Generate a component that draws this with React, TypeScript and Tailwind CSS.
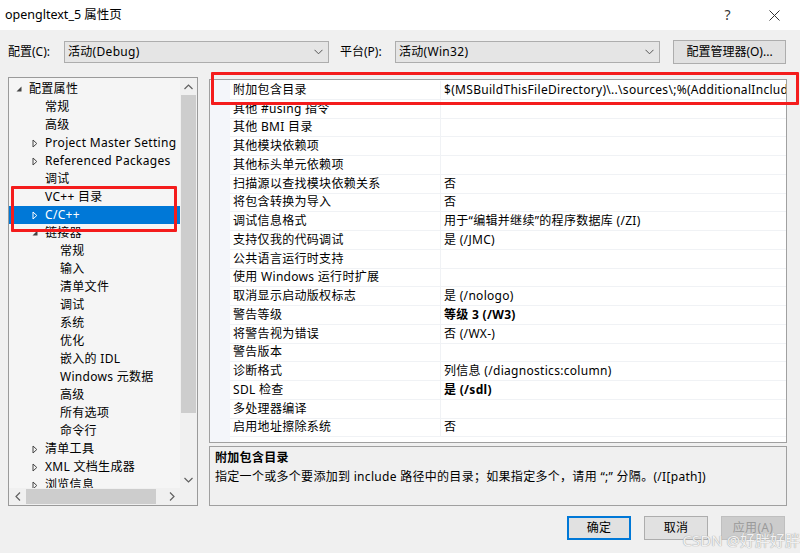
import React from "react";

type TreeItem = { t: string; lvl: 0 | 1 | 2; icon?: "exp" | "col"; sel?: boolean };

const tree: TreeItem[] = [
  { t: "配置属性", lvl: 0, icon: "exp" },
  { t: "常规", lvl: 1 },
  { t: "高级", lvl: 1 },
  { t: "Project Master Setting", lvl: 1, icon: "col" },
  { t: "Referenced Packages", lvl: 1, icon: "col" },
  { t: "调试", lvl: 1 },
  { t: "VC++ 目录", lvl: 1 },
  { t: "C/C++", lvl: 1, icon: "col", sel: true },
  { t: "链接器", lvl: 1, icon: "exp" },
  { t: "常规", lvl: 2 },
  { t: "输入", lvl: 2 },
  { t: "清单文件", lvl: 2 },
  { t: "调试", lvl: 2 },
  { t: "系统", lvl: 2 },
  { t: "优化", lvl: 2 },
  { t: "嵌入的 IDL", lvl: 2 },
  { t: "Windows 元数据", lvl: 2 },
  { t: "高级", lvl: 2 },
  { t: "所有选项", lvl: 2 },
  { t: "命令行", lvl: 2 },
  { t: "清单工具", lvl: 1, icon: "col" },
  { t: "XML 文档生成器", lvl: 1, icon: "col" },
  { t: "浏览信息", lvl: 1, icon: "col" },
];

const props: { n: string; v?: string; b?: boolean }[] = [
  { n: "附加包含目录", v: "$(MSBuildThisFileDirectory)\\..\\sources\\;%(AdditionalIncludeDirectories)" },
  { n: "其他 #using 指令" },
  { n: "其他 BMI 目录" },
  { n: "其他模块依赖项" },
  { n: "其他标头单元依赖项" },
  { n: "扫描源以查找模块依赖关系", v: "否" },
  { n: "将包含转换为导入", v: "否" },
  { n: "调试信息格式", v: "用于“编辑并继续”的程序数据库 (/ZI)" },
  { n: "支持仅我的代码调试", v: "是 (/JMC)" },
  { n: "公共语言运行时支持" },
  { n: "使用 Windows 运行时扩展" },
  { n: "取消显示启动版权标志", v: "是 (/nologo)" },
  { n: "警告等级", v: "等级 3 (/W3)", b: true },
  { n: "将警告视为错误", v: "否 (/WX-)" },
  { n: "警告版本" },
  { n: "诊断格式", v: "列信息 (/diagnostics:column)" },
  { n: "SDL 检查", v: "是 (/sdl)", b: true },
  { n: "多处理器编译" },
  { n: "启用地址擦除系统", v: "否" },
];

function Expander({ kind, sel }: { kind?: "exp" | "col"; sel?: boolean }) {
  const c = sel ? "#ffffff" : "#444444";
  return (
    <span className="w-[13px] h-full flex items-center shrink-0">
      {kind === "exp" && (
        <svg width="6" height="6" viewBox="0 0 6 6">
          <path d="M5.5 0.5 L5.5 5.5 L0.5 5.5 Z" fill={c} />
        </svg>
      )}
      {kind === "col" && (
        <svg width="6" height="9" viewBox="0 0 6 9">
          <path d="M1 1 L4.8 4.5 L1 8 Z" fill="none" stroke={c} strokeWidth="1" />
        </svg>
      )}
    </span>
  );
}

function Chevron() {
  return (
    <svg width="9" height="6" viewBox="0 0 9 6">
      <path d="M0.5 0.8 L4.5 4.8 L8.5 0.8" fill="none" stroke="#555" strokeWidth="1" />
    </svg>
  );
}

export default function App() {
  return (
    <div className="relative w-[800px] h-[553px] bg-[#f0f0f0] flex flex-col overflow-hidden text-[12px] tracking-[0.3px] text-black font-['Noto_Sans','Noto_Sans_CJK_SC',sans-serif]">
      {/* title bar */}
      <div className="h-[30px] bg-white flex items-center shrink-0">
        <span className="pl-[5px] text-[12.5px] tracking-normal leading-none">opengltext_5 属性页</span>
        <div className="ml-auto flex items-center">
          <span className="text-[14px] leading-none mr-[38px] text-[#333]">?</span>
          <svg width="11" height="11" viewBox="0 0 11 11" className="mr-[20px]">
            <path d="M0.5 0.5 L10.5 10.5 M10.5 0.5 L0.5 10.5" stroke="#333" strokeWidth="1" />
          </svg>
        </div>
      </div>

      {/* config row */}
      <div className="mt-[10px] h-[24px] flex items-center shrink-0">
        <span className="ml-[8px] w-[56px] tracking-normal">配置(C):</span>
        <div className="h-[22px] w-[265px] bg-[#e5e5e5] border border-[#adadad] flex items-center pl-[3px] pr-[5px]">
          <span>活动(Debug)</span>
          <span className="ml-auto">
            <Chevron />
          </span>
        </div>
        <span className="ml-[11px] w-[55px] tracking-normal">平台(P):</span>
        <div className="h-[22px] w-[265px] bg-[#e5e5e5] border border-[#adadad] flex items-center pl-[3px] pr-[5px]">
          <span>活动(Win32)</span>
          <span className="ml-auto">
            <Chevron />
          </span>
        </div>
        <div className="ml-[13px] h-[24px] w-[113px] bg-[#e1e1e1] border border-[#adadad] flex items-center justify-center tracking-normal">
          配置管理器(O)...
        </div>
      </div>

      {/* main */}
      <div className="mt-[13px] flex shrink-0">
        {/* tree */}
        <div className="ml-[8px] w-[190px] h-[429px] border border-[#9a9a9a] bg-[#f5f5f5] grid grid-cols-[171px_17px] grid-rows-[410px_17px]">
          <div className="overflow-hidden pt-[2px]">
            {tree.map((it, i) => (
              <div
                key={i}
                className={
                  "h-[18px] flex items-center whitespace-nowrap " +
                  (it.sel ? "bg-[#0078d7] text-white " : "") +
                  (it.lvl === 0 ? "pl-[7px]" : it.lvl === 1 ? "pl-[23px]" : "pl-[38px]")
                }
              >
                <Expander kind={it.icon} sel={it.sel} />
                <span>{it.t}</span>
              </div>
            ))}
          </div>
          {/* vertical scrollbar */}
          <div className="bg-[#f0f0f0] flex flex-col items-center">
            <div className="h-[17px] flex items-center justify-center">
              <svg width="9" height="6" viewBox="0 0 9 6">
                <path d="M0.5 5 L4.5 1 L8.5 5" fill="none" stroke="#606060" strokeWidth="1.2" />
              </svg>
            </div>
            <div className="w-[15px] h-[318px] bg-[#cdcdcd]" />
            <div className="mt-auto h-[17px] flex items-center justify-center">
              <svg width="9" height="6" viewBox="0 0 9 6">
                <path d="M0.5 1 L4.5 5 L8.5 1" fill="none" stroke="#606060" strokeWidth="1.2" />
              </svg>
            </div>
          </div>
          {/* horizontal scrollbar */}
          <div className="bg-[#f0f0f0] flex items-center">
            <div className="w-[17px] flex items-center justify-center">
              <svg width="6" height="9" viewBox="0 0 6 9">
                <path d="M5 0.5 L1 4.5 L5 8.5" fill="none" stroke="#606060" strokeWidth="1.2" />
              </svg>
            </div>
            <div className="h-[15px] w-[130px] bg-[#cdcdcd]" />
            <div className="ml-auto w-[17px] flex items-center justify-center">
              <svg width="6" height="9" viewBox="0 0 6 9">
                <path d="M1 0.5 L5 4.5 L1 8.5" fill="none" stroke="#606060" strokeWidth="1.2" />
              </svg>
            </div>
          </div>
          <div className="bg-[#f0f0f0]" />
        </div>

        {/* right column */}
        <div className="ml-[11px] w-[578px] flex flex-col">
          <div className="mt-[2px] h-[364px] border border-[#a0a0a0] bg-white flex">
            <div className="w-[20px] bg-[#f4f6fa] shrink-0" />
            <div className="flex-1 flex flex-col overflow-hidden pt-[1px]">
              {props.map((p, i) => (
                <div key={i} className="h-[18.75px] flex border-b border-[#f0f2f5] shrink-0">
                  <div className="w-[211px] shrink-0 pl-[3px] flex items-center whitespace-nowrap border-r border-[#f0f2f5]">
                    {p.n}
                  </div>
                  <div
                    className={
                      "flex-1 pl-[3px] flex items-center whitespace-nowrap overflow-hidden " +
                      (p.b ? "font-bold" : "")
                    }
                  >
                    {p.v ?? ""}
                  </div>
                </div>
              ))}
            </div>
          </div>
          <div className="mt-[3px] h-[60px] border border-[#a0a0a0] bg-[#f0f0f0] px-[5px] pt-[2px]">
            <div className="font-bold h-[18px] flex items-center">附加包含目录</div>
            <div className="h-[20px] flex items-center">
              指定一个或多个要添加到 include 路径中的目录；如果指定多个，请用 “;” 分隔。(/I[path])
            </div>
          </div>
        </div>
      </div>

      {/* buttons */}
      <div className="mt-[10px] flex justify-end pr-[15px] gap-[13px]">
        <div className="w-[64px] h-[24px] bg-[#e1e1e1] border-2 border-[#0078d7] flex items-center justify-center">
          确定
        </div>
        <div className="w-[64px] h-[24px] bg-[#e1e1e1] border border-[#adadad] flex items-center justify-center">
          取消
        </div>
        <div className="w-[64px] h-[24px] bg-[#cccccc] border border-[#bfbfbf] text-[#9a9a9a] flex items-center justify-center">
          应用(A)
        </div>
      </div>

      {/* annotations */}
      <div className="absolute left-[11px] top-[186px] w-[166px] h-[46px] border-[3px] border-[#f41c1c] rounded-[1px]" />
      <div className="absolute left-[211px] top-[72px] w-[588px] h-[33px] border-[3px] border-[#f41c1c] rounded-[1px]" />

      {/* watermark */}
      <div className="absolute right-[0px] top-[529px] text-[15px] tracking-normal text-[#f2f2f2] whitespace-nowrap [text-shadow:0_0_1px_#a8a8a8,0_0_1px_#a8a8a8]">
        CSDN @好胖好胖
      </div>
    </div>
  );
}
